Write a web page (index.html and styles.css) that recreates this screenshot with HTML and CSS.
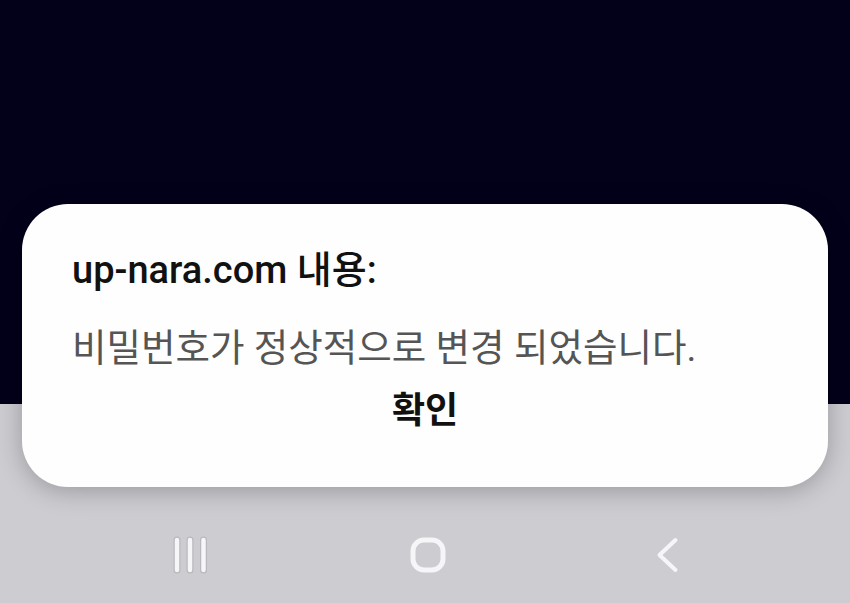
FILE: index.html
```html
<!DOCTYPE html>
<html lang="ko">
<head>
    <meta charset="UTF-8">
    <title>up-nara.com</title>
    <link rel="stylesheet" href="styles.css">
</head>
<body>
    <div class="screen">
        <div class="page"></div>
        <div class="dim">
            <div class="navbar">
                <div class="nav-btn">
                    <!-- recent apps -->
                    <svg width="40" height="40" viewBox="0 0 40 40">
                        <g fill="none" stroke="#b9b8bd" stroke-width="7" stroke-linecap="round">
                            <line x1="7" y1="5" x2="7" y2="35"/>
                            <line x1="20" y1="5" x2="20" y2="35"/>
                            <line x1="33.5" y1="5" x2="33.5" y2="35"/>
                        </g>
                        <g fill="none" stroke="#f6f6f8" stroke-width="4.5" stroke-linecap="round">
                            <line x1="7" y1="5" x2="7" y2="35"/>
                            <line x1="20" y1="5" x2="20" y2="35"/>
                            <line x1="33.5" y1="5" x2="33.5" y2="35"/>
                        </g>
                    </svg>
                </div>
                <div class="nav-btn">
                    <!-- home -->
                    <svg width="40" height="40" viewBox="0 0 40 40">
                        <rect x="5" y="5" width="30" height="30" rx="11" fill="none" stroke="#f6f6f8" stroke-width="5"/>
                    </svg>
                </div>
                <div class="nav-btn">
                    <!-- back -->
                    <svg width="40" height="40" viewBox="0 0 40 40">
                        <polyline points="28.5,5 12.5,20 28.5,35" fill="none" stroke="#f6f6f8" stroke-width="4" stroke-linecap="round" stroke-linejoin="round"/>
                    </svg>
                </div>
            </div>
        </div>

        <div class="dialog">
            <div class="dialog-title">up-nara.com 내용:</div>
            <div class="dialog-message">비밀번호가 정상적으로 변경 되었습니다.</div>
            <div class="dialog-actions">
                <button class="dialog-ok">확인</button>
            </div>
        </div>
    </div>
</body>
</html>
```

FILE: styles.css
```css
html, body {
    margin: 0;
    padding: 0;
}
body {
    font-family: Roboto, "Noto Sans CJK KR", sans-serif;
    background-color: #cdccd1;
}
.screen {
    position: relative;
    width: 850px;
    height: 603px;
    overflow: hidden;
    display: flex;
    flex-direction: column;
}
.page {
    height: 404px;
    background-color: #03001a;
}
.dim {
    flex: 1;
    display: flex;
    flex-direction: column;
    justify-content: flex-end;
}
.navbar {
    height: 96px;
    display: flex;
    align-items: center;
    padding: 0 64px 0 71px;
}
.nav-btn {
    flex: 1;
    display: flex;
    justify-content: center;
}
.nav-btn svg {
    display: block;
}
.dialog {
    position: absolute;
    left: 22px;
    top: 204px;
    width: 806px;
    height: 283px;
    box-sizing: border-box;
    background-color: #fefefe;
    border-radius: 46px;
    box-shadow: 0 4px 24px rgba(0, 0, 0, 0.25);
    padding: 44px 50px 0 50px;
}
.dialog-title {
    font-size: 38px;
    font-weight: 500;
    color: #111;
    line-height: 44px;
}
.dialog-message {
    margin-top: 34px;
    font-size: 37.5px;
    font-weight: 400;
    color: #555;
    line-height: 44px;
}
.dialog-actions {
    display: flex;
    justify-content: center;
    margin-top: 19px;
}
.dialog-ok {
    border: none;
    background: none;
    padding: 0;
    font-family: inherit;
    font-size: 36px;
    font-weight: 700;
    color: #111;
    line-height: 44px;
}
```
